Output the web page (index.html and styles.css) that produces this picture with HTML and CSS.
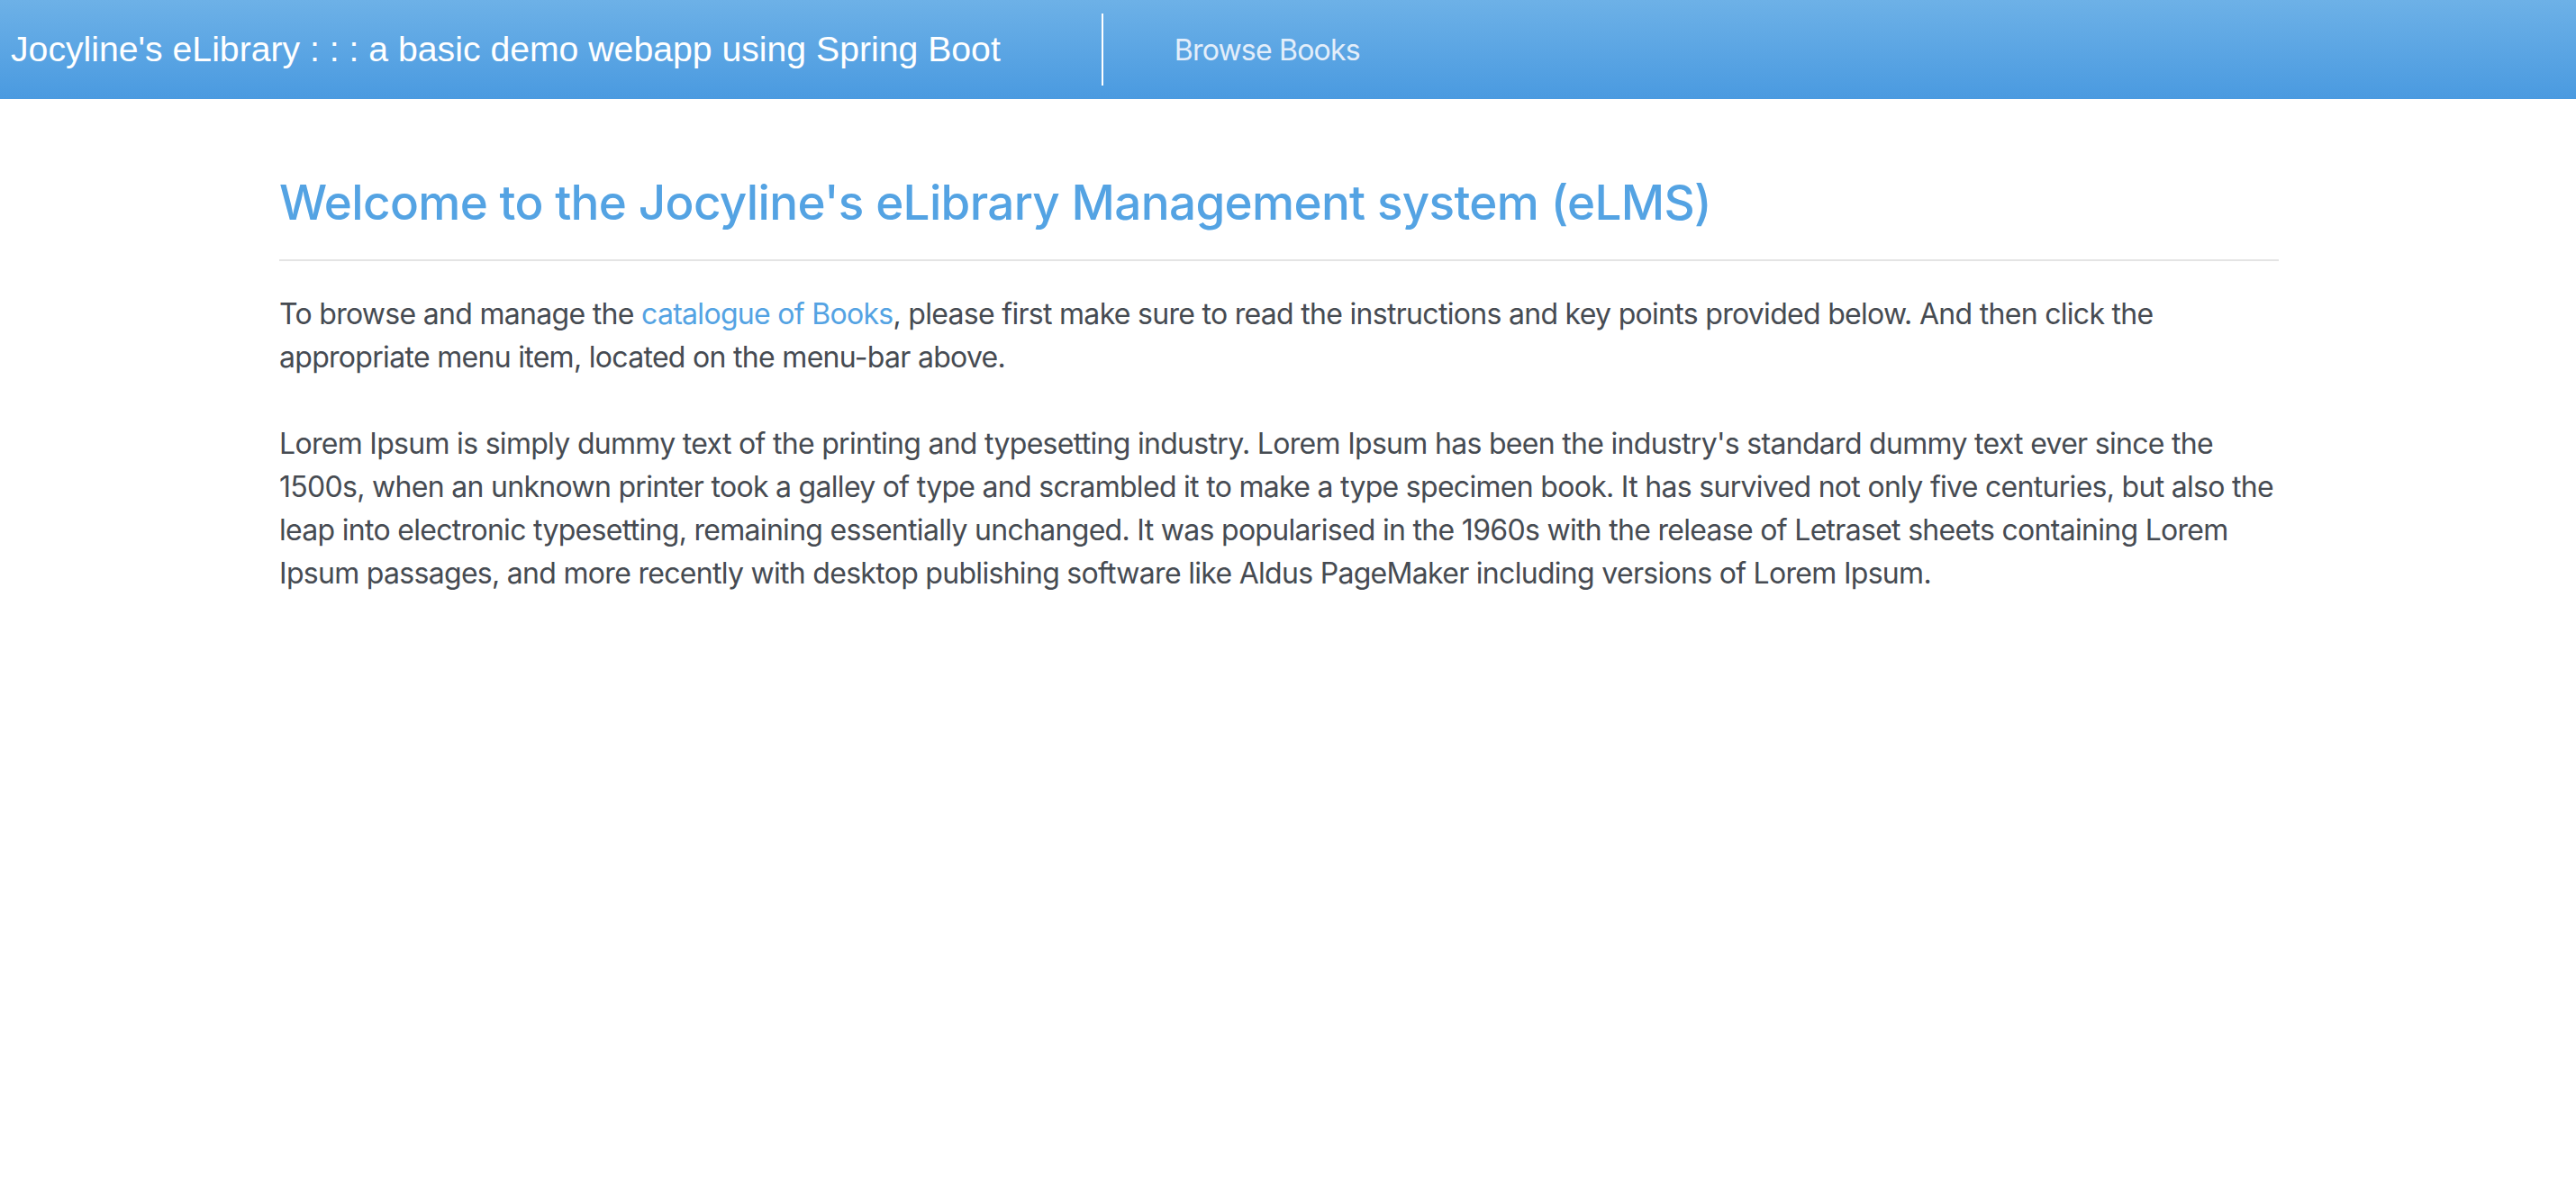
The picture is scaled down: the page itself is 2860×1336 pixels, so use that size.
FILE: index.html
```html
<!DOCTYPE html>
<html lang="en">
<head>
<meta charset="utf-8">
<title>Jocyline's eLibrary</title>
<link rel="stylesheet" href="styles.css">
</head>
<body>
<header class="navbar">
  <a class="brand" href="#">Jocyline's eLibrary : : : a basic demo webapp using Spring Boot</a>
  <span class="divider"></span>
  <nav class="menu">
    <a class="menu-link" href="#">Browse Books</a>
  </nav>
</header>
<main class="container">
  <h1 class="title">Welcome to the Jocyline's eLibrary Management system (eLMS)</h1>
  <hr class="rule">
  <p class="intro">To browse and manage the <a class="link" href="#">catalogue of Books</a>, please first make sure to read the instructions and key points provided below. And then click the appropriate menu item, located on the menu-bar above.</p>
  <p class="lorem">Lorem Ipsum is simply dummy text of the printing and typesetting industry. Lorem Ipsum has been the industry's standard dummy text ever since the 1500s, when an unknown printer took a galley of type and scrambled it to make a type specimen book. It has survived not only five centuries, but also the leap into electronic typesetting, remaining essentially unchanged. It was popularised in the 1960s with the release of Letraset sheets containing Lorem Ipsum passages, and more recently with desktop publishing software like Aldus PageMaker including versions of Lorem Ipsum.</p>
</main>
</body>
</html>
```

FILE: styles.css
```css
* { box-sizing: border-box; }
html, body { margin: 0; padding: 0; }
body {
  font-family: Inter, "Noto Sans", "Liberation Sans", sans-serif;
  color: #464b52;
  background: #ffffff;
}
.navbar {
  height: 110px;
  display: flex;
  align-items: center;
  padding: 0 0 0 12px;
  background: linear-gradient(to bottom, #6db1e7 0%, #4a9ae0 100%);
}
.brand {
  font-family: "Liberation Sans", Arial, sans-serif;
  font-size: 39.2px;
  color: #ffffff;
  text-decoration: none;
  white-space: nowrap;
}
.divider {
  width: 2px;
  height: 80px;
  background: #ffffff;
  margin-left: 112px;
}
.menu { display: flex; margin-left: 79px; }
.menu-link {
  font-size: 32px;
  letter-spacing: -0.8px;
  color: #e3eefa;
  text-decoration: none;
}
.container {
  width: 2220px;
  margin: 0 0 0 310px;
  padding-top: 84px;
}
.title {
  font-size: 53px;
  font-weight: 500;
  letter-spacing: -0.67px;
  line-height: 1.2;
  color: #54a3e3;
  margin: 0;
}
.rule {
  border: 0;
  border-top: 2px solid #e4e4e4;
  margin: 30px 0 35px;
}
.intro, .lorem {
  font-size: 32px;
  line-height: 48px;
  letter-spacing: -0.7px;
  margin: 0;
}
.intro { margin-bottom: 48px; }
.link { color: #54a3e3; text-decoration: none; }
```
